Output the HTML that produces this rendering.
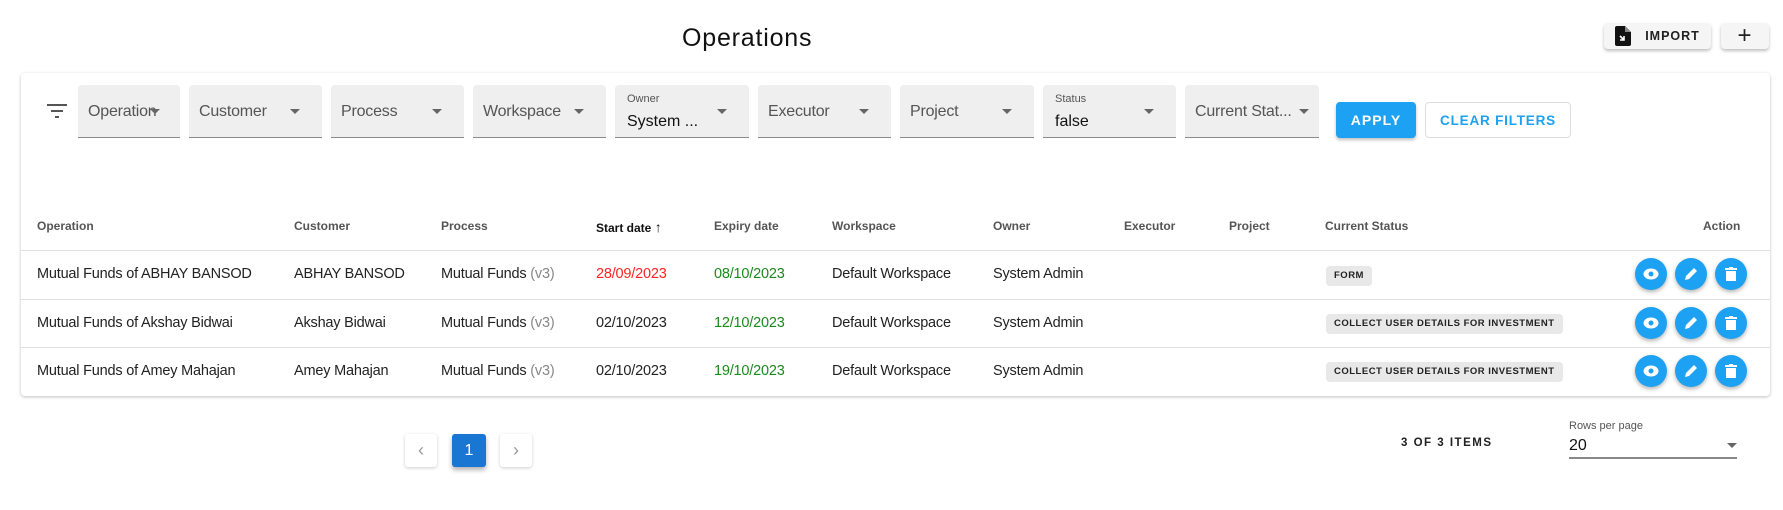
<!DOCTYPE html>
<html><head><meta charset="utf-8"><style>
*{box-sizing:border-box;margin:0;padding:0}
body{width:1783px;height:510px;background:#fff;font-family:"Liberation Sans",sans-serif;position:relative;overflow:hidden;color:#212121}
.a{position:absolute}
.title{left:682px;top:24px;font-size:25px;color:#111;letter-spacing:.8px}
.btn{background:#f5f5f5;border-radius:4px;box-shadow:0 2px 3px rgba(0,0,0,.25);display:flex;align-items:center;justify-content:center;font-size:12.5px;font-weight:bold;letter-spacing:1px}
.card{left:21px;top:73px;width:1749px;height:323px;border-radius:4px;box-shadow:0 1px 3px rgba(0,0,0,.25);background:#fff}
.f{top:85px;height:53px;background:#efefef;border-bottom:1.5px solid #8a8a8a;border-radius:4px 4px 0 0;font-size:16px;color:#555}
.f span{position:absolute;left:10px;top:18px;white-space:nowrap;letter-spacing:-.2px}
.f small{position:absolute;left:12px;top:8px;font-size:11px;color:#555}
.f b{position:absolute;left:12px;top:28px;font-weight:normal;color:#111}
.f i{position:absolute;right:22px;top:24px;border-left:5px solid transparent;border-right:5px solid transparent;border-top:5px solid #666}
.h{top:219px;font-size:12px;font-weight:bold;color:#555}
.c{font-size:14.5px;color:#222;letter-spacing:-.2px}
.line{left:21px;width:1749px;height:1px;background:#e0e0e0}
.chip{background:#e8e8e8;border-radius:4px;font-size:9.5px;font-weight:bold;letter-spacing:.5px;padding:0 8px;height:20px;line-height:20px;color:#222}
.ab{width:32px;height:32px;border-radius:50%;background:#1da1f2;box-shadow:0 2px 4px rgba(0,0,0,.3);display:flex;align-items:center;justify-content:center}
.pg{width:32px;height:33px;border-radius:3px;background:#fff;box-shadow:0 1px 3px rgba(0,0,0,.2);display:flex;align-items:center;justify-content:center;color:#999;font-size:18px}
</style></head><body>
<div class="a title">Operations</div>
<div class="a btn" style="left:1604px;top:23px;width:107px;height:26px"><svg width="16" height="20" viewBox="0 0 16 20" style="margin-right:14px"><path d="M0 2a2 2 0 0 1 2-2h8l6 6v12a2 2 0 0 1-2 2H2a2 2 0 0 1-2-2z" fill="#111"/><path d="M10 0v6h6" fill="#888"/><path d="M5 10l4 4M9 10v4H5" stroke="#fff" stroke-width="1.6" fill="none"/></svg>IMPORT</div>
<div class="a btn" style="left:1721px;top:23px;width:48px;height:26px;font-size:24px;font-weight:normal">+</div>
<div class="a card"></div>
<svg class="a" style="left:47px;top:104px" width="20" height="14"><path d="M0 1h20M4 7h12M8 13h4" stroke="#555" stroke-width="2"/></svg>
<div class="a f" style="left:78px;width:102px"><span>Operation</span><i style="right:20px"></i></div>
<div class="a f" style="left:189px;width:133px"><span>Customer</span><i></i></div>
<div class="a f" style="left:331px;width:133px"><span>Process</span><i></i></div>
<div class="a f" style="left:473px;width:133px"><span>Workspace</span><i></i></div>
<div class="a f" style="left:615px;width:134px"><small>Owner</small><b>System ...</b><i></i></div>
<div class="a f" style="left:758px;width:133px"><span>Executor</span><i></i></div>
<div class="a f" style="left:900px;width:134px"><span>Project</span><i></i></div>
<div class="a f" style="left:1043px;width:133px"><small>Status</small><b>false</b><i></i></div>
<div class="a f" style="left:1185px;width:134px"><span>Current Stat...</span><i style="right:10px"></i></div>
<div class="a" style="left:1336px;top:102px;width:80px;height:36px;background:#1da1f2;border-radius:4px;box-shadow:0 2px 3px rgba(0,0,0,.25);color:#fff;font-size:14px;font-weight:bold;letter-spacing:1px;display:flex;align-items:center;justify-content:center">APPLY</div>
<div class="a" style="left:1425px;top:102px;width:146px;height:36px;border:1px solid #ddd;border-radius:4px;color:#1da1f2;font-size:13.5px;font-weight:bold;letter-spacing:.8px;display:flex;align-items:center;justify-content:center">CLEAR FILTERS</div>

<div class="a h" style="left:37px">Operation</div>
<div class="a h" style="left:294px">Customer</div>
<div class="a h" style="left:441px">Process</div>
<div class="a h" style="left:596px;color:#111">Start date <span style="font-size:14px">↑</span></div>
<div class="a h" style="left:714px">Expiry date</div>
<div class="a h" style="left:832px">Workspace</div>
<div class="a h" style="left:993px">Owner</div>
<div class="a h" style="left:1124px">Executor</div>
<div class="a h" style="left:1229px">Project</div>
<div class="a h" style="left:1325px">Current Status</div>
<div class="a h" style="left:1703px">Action</div>
<div class="a line" style="top:250px"></div>
<div class="a line" style="top:299px"></div>
<div class="a line" style="top:347px"></div>

<div class="a c" style="left:37px;top:266px">Mutual Funds of ABHAY BANSOD</div>
<div class="a c" style="left:294px;top:266px">ABHAY BANSOD</div>
<div class="a c" style="left:441px;top:266px">Mutual Funds <span style="color:#888">(v3)</span></div>
<div class="a c" style="left:596px;top:266px;color:#f22">28/09/2023</div>
<div class="a c" style="left:714px;top:266px;color:#1a8a1a">08/10/2023</div>
<div class="a c" style="left:832px;top:266px">Default Workspace</div>
<div class="a c" style="left:993px;top:266px">System Admin</div>
<div class="a chip" style="left:1326px;top:266px">FORM</div>

<div class="a c" style="left:37px;top:315px">Mutual Funds of Akshay Bidwai</div>
<div class="a c" style="left:294px;top:315px">Akshay Bidwai</div>
<div class="a c" style="left:441px;top:315px">Mutual Funds <span style="color:#888">(v3)</span></div>
<div class="a c" style="left:596px;top:315px">02/10/2023</div>
<div class="a c" style="left:714px;top:315px;color:#1a8a1a">12/10/2023</div>
<div class="a c" style="left:832px;top:315px">Default Workspace</div>
<div class="a c" style="left:993px;top:315px">System Admin</div>
<div class="a chip" style="left:1326px;top:314px">COLLECT USER DETAILS FOR INVESTMENT</div>

<div class="a c" style="left:37px;top:363px">Mutual Funds of Amey Mahajan</div>
<div class="a c" style="left:294px;top:363px">Amey Mahajan</div>
<div class="a c" style="left:441px;top:363px">Mutual Funds <span style="color:#888">(v3)</span></div>
<div class="a c" style="left:596px;top:363px">02/10/2023</div>
<div class="a c" style="left:714px;top:363px;color:#1a8a1a">19/10/2023</div>
<div class="a c" style="left:832px;top:363px">Default Workspace</div>
<div class="a c" style="left:993px;top:363px">System Admin</div>
<div class="a chip" style="left:1326px;top:362px">COLLECT USER DETAILS FOR INVESTMENT</div>

<div class="a" style="left:1635px;top:258px;display:flex;gap:8px">
<div class="ab"><svg width="16" height="12"><ellipse cx="8" cy="6" rx="7.5" ry="5.5" fill="#fff"/><circle cx="8" cy="6" r="2.5" fill="#1da1f2"/></svg></div>
<div class="ab"><svg width="14" height="14"><path d="M1 13l1-4 8-8 3 3-8 8z" fill="#fff"/></svg></div>
<div class="ab"><svg width="12" height="15"><rect x="0" y="1" width="12" height="2" fill="#fff"/><rect x="4" y="0" width="4" height="2" fill="#fff"/><path d="M1 4h10v10H1z" fill="#fff"/></svg></div>
</div>
<div class="a" style="left:1635px;top:307px;display:flex;gap:8px">
<div class="ab"><svg width="16" height="12"><ellipse cx="8" cy="6" rx="7.5" ry="5.5" fill="#fff"/><circle cx="8" cy="6" r="2.5" fill="#1da1f2"/></svg></div>
<div class="ab"><svg width="14" height="14"><path d="M1 13l1-4 8-8 3 3-8 8z" fill="#fff"/></svg></div>
<div class="ab"><svg width="12" height="15"><rect x="0" y="1" width="12" height="2" fill="#fff"/><rect x="4" y="0" width="4" height="2" fill="#fff"/><path d="M1 4h10v10H1z" fill="#fff"/></svg></div>
</div>
<div class="a" style="left:1635px;top:355px;display:flex;gap:8px">
<div class="ab"><svg width="16" height="12"><ellipse cx="8" cy="6" rx="7.5" ry="5.5" fill="#fff"/><circle cx="8" cy="6" r="2.5" fill="#1da1f2"/></svg></div>
<div class="ab"><svg width="14" height="14"><path d="M1 13l1-4 8-8 3 3-8 8z" fill="#fff"/></svg></div>
<div class="ab"><svg width="12" height="15"><rect x="0" y="1" width="12" height="2" fill="#fff"/><rect x="4" y="0" width="4" height="2" fill="#fff"/><path d="M1 4h10v10H1z" fill="#fff"/></svg></div>
</div>

<div class="a pg" style="left:405px;top:434px">‹</div>
<div class="a pg" style="left:452px;top:434px;width:34px;background:#1976d2;color:#fff;font-size:16px;box-shadow:0 3px 5px rgba(0,0,0,.3)">1</div>
<div class="a pg" style="left:500px;top:434px">›</div>
<div class="a" style="left:1401px;top:437px;font-size:11.5px;font-weight:bold;letter-spacing:1.5px">3 OF 3 ITEMS</div>
<div class="a" style="left:1569px;top:420px;font-size:11px;color:#555">Rows per page</div>
<div class="a" style="left:1569px;top:437px;font-size:16px;color:#111">20</div>
<div class="a" style="left:1727px;top:443px;border-left:5px solid transparent;border-right:5px solid transparent;border-top:5px solid #666"></div>
<div class="a" style="left:1569px;top:457px;width:168px;height:1.5px;background:#888"></div>
</body></html>
